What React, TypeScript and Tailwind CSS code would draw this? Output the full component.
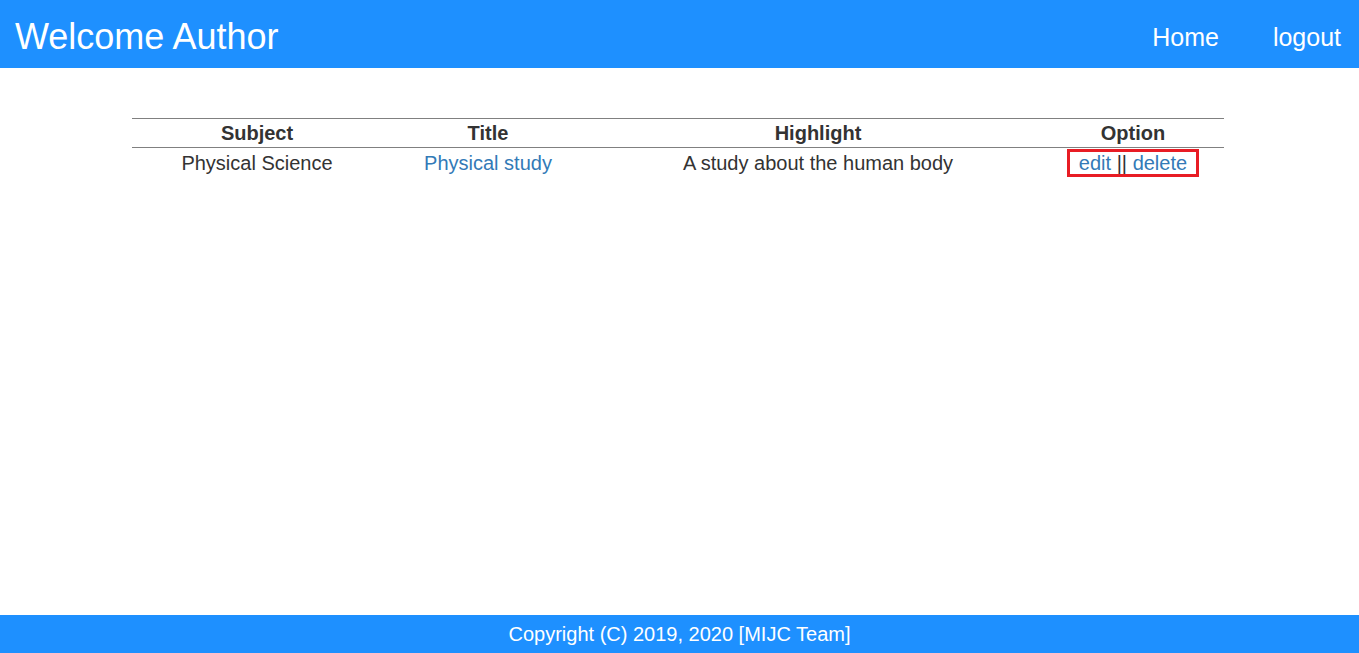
export default function App() {
  return (
    <div className="flex min-h-[653px] flex-col bg-white font-['Liberation_Sans',Arial,sans-serif] text-[#333]">
      <header className="flex h-[68px] items-center justify-between bg-[#1e90ff] pl-[15px] pr-[18px] pt-[6px] text-white">
        <h1 className="text-[36px] leading-none">Welcome Author</h1>
        <nav className="flex items-center gap-[54px] text-[25px] leading-none">
          <a href="#">Home</a>
          <a href="#">logout</a>
        </nav>
      </header>

      <main className="flex-1 px-[132px] pt-[50px]">
        <table className="w-[1092px] table-fixed border-collapse text-[20px]">
          <colgroup>
            <col className="w-[250px]" />
            <col className="w-[212px]" />
            <col className="w-[448px]" />
            <col className="w-[182px]" />
          </colgroup>
          <thead>
            <tr className="h-[29px] border-y border-[#808080] leading-[26px]">
              <th className="font-bold">Subject</th>
              <th className="font-bold">Title</th>
              <th className="font-bold">Highlight</th>
              <th className="font-bold">Option</th>
            </tr>
          </thead>
          <tbody>
            <tr className="h-[30px] text-center leading-[26px]">
              <td>Physical Science</td>
              <td>
                <a href="#" className="text-[#337ab7]">Physical study</a>
              </td>
              <td>A study about the human body</td>
              <td>
                <span className="inline-block border-[3px] border-[#e81c24] px-[9px] leading-[22px]">
                  <a href="#" className="text-[#337ab7]">edit</a> || <a href="#" className="text-[#337ab7]">delete</a>
                </span>
              </td>
            </tr>
          </tbody>
        </table>
      </main>

      <footer className="flex h-[38px] items-center justify-center bg-[#1e90ff] text-[20px] text-white">
        Copyright (C) 2019, 2020 [MIJC Team]
      </footer>
    </div>
  );
}
